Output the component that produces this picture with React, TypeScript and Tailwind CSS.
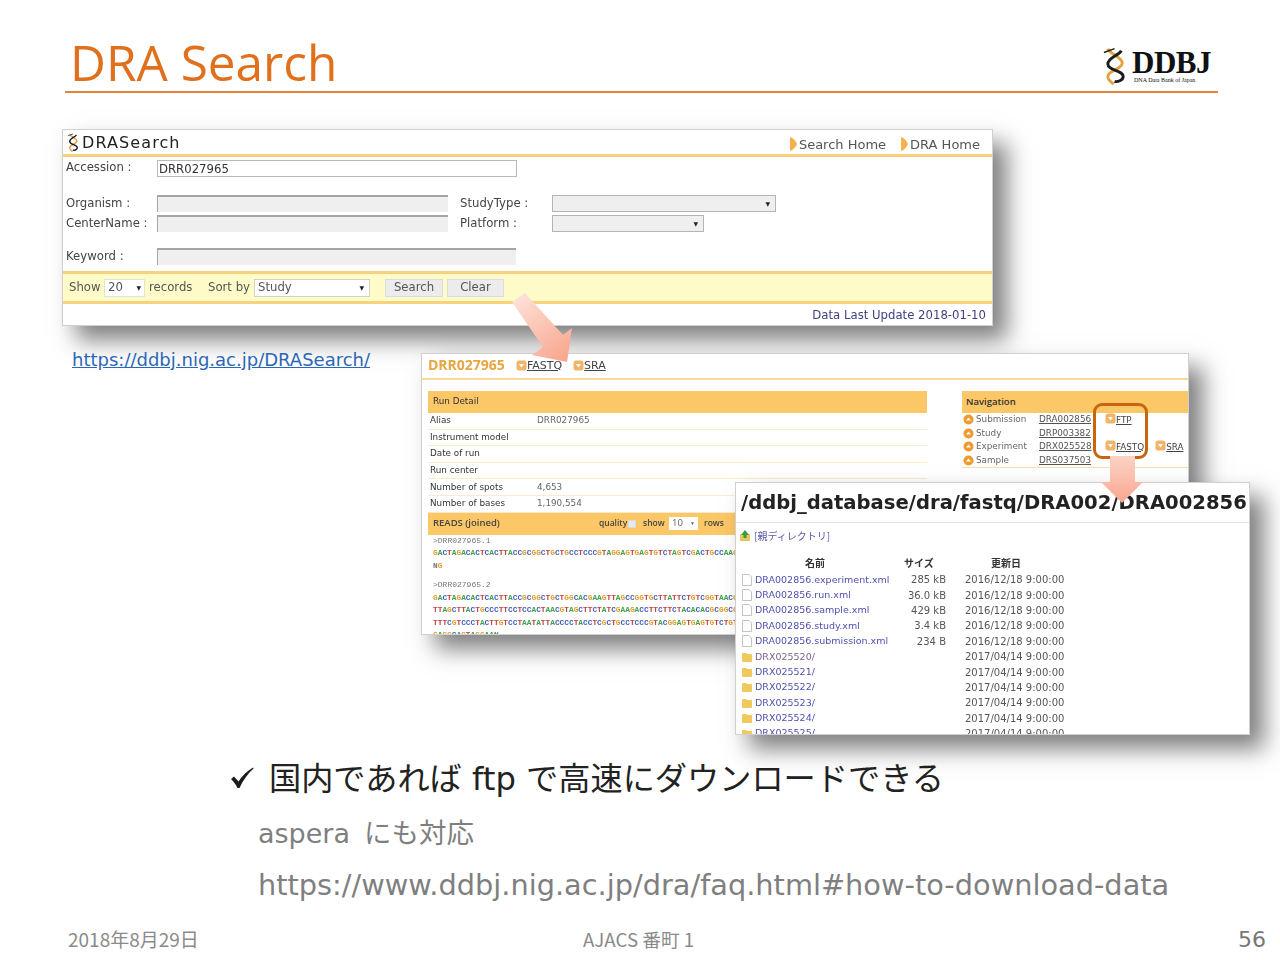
const sans = "font-['DejaVu_Sans',sans-serif]";
const strong = "font-['Open_Sans',sans-serif] font-semibold text-[9.5px]";

const seqColor: Record<string, string> = {
  A: "text-[#3fa34d]",
  C: "text-[#3f5fc0]",
  G: "text-[#e09a2b]",
  T: "text-[#c0453f]",
};

const Seq = ({ text }: { text: string }) => (
  <div className="h-[12.5px] whitespace-nowrap overflow-hidden font-['Liberation_Mono',monospace] text-[7.8px] leading-[12.5px] font-bold">
    {text.split("").map((c, i) => (
      <span key={i} className={seqColor[c]}>
        {c}
      </span>
    ))}
  </div>
);

const Helix = ({ className }: { className: string }) => (
  <svg viewBox="0 0 26 40" className={className} fill="none">
    <path d="M5 2 C8 9 20 10 20 17 C20 24 5 24 5 31 C5 35 9 37 11 39" stroke="#e3a23c" strokeWidth="3" />
    <path d="M19 4 C17 9 5 11 5 18 C5 25 21 24 21 31 C21 35 15 37 12 36" stroke="#1c1c1c" strokeWidth="3" />
    <path d="M1 6 L12 2" stroke="#1c1c1c" strokeWidth="1.5" />
  </svg>
);

const Bullet = () => (
  <svg viewBox="0 0 8 14" className="w-[8px] h-[14px] shrink-0 mb-[2px]">
    <path d="M1 0 C4 1 7 4 8 7 C7 10 4 13 1 14 Z" fill="#f3b04d" />
  </svg>
);

const Dl = () => (
  <svg viewBox="0 0 11 11" className="w-[11px] h-[11px] shrink-0 mb-[3px]">
    <rect x="0.5" y="0.5" width="10" height="10" rx="2.5" fill="#f0b565" />
    <path d="M3 4 H8 L5.5 7.5 Z" fill="#fff" />
  </svg>
);

const NavDot = () => (
  <svg viewBox="0 0 11 11" className="w-[11px] h-[11px] shrink-0">
    <circle cx="5.5" cy="5.5" r="5" fill="#ee9a2e" />
    <path d="M3 6.5 L5.5 3.5 L8 6.5 Z" fill="#fff" />
  </svg>
);

const FileIcon = () => (
  <svg viewBox="0 0 10 12" className="w-[10px] h-[12px] shrink-0">
    <path d="M0.5 0.5 H7 L9.5 3 V11.5 H0.5 Z" fill="#fff" stroke="#c4c4c4" />
  </svg>
);

const FolderIcon = () => (
  <svg viewBox="0 0 10 10" className="w-[10px] h-[10px] shrink-0">
    <path d="M0 2 Q0 1 1 1 H4 L5 2 H9 Q10 2 10 3 V9 Q10 10 9 10 H1 Q0 10 0 9 Z" fill="#f0c85c" />
  </svg>
);

const DisabledInput = ({ width }: { width: string }) => (
  <div className={`${width} h-[17px] bg-[#efefef] border-t-2 border-l border-[#a5a5a5]`} />
);

const DisabledSelect = ({ width }: { width: string }) => (
  <div className={`${width} h-[17px] bg-[#efefef] border border-[#b5b5b5] flex items-center justify-end pr-[5px] text-[6px] text-[#222]`}>
    ▼
  </div>
);

const SearchWindow = () => (
  <div className={`absolute left-[62px] top-[36px] w-[931px] h-[197px] bg-white border border-[#d0d0d0] shadow-[14px_14px_22px_rgba(0,0,0,0.5)] text-[#444] text-[11.7px] blur-[0.2px] ${sans}`}>
    <div className="h-[27px] border-b-[3px] border-[#f6d27e] flex items-center pl-[4px] pr-[12px]">
      <Helix className="w-[13px] h-[19px]" />
      <span className="ml-[2px] mt-[1px] text-[16px] tracking-[1.1px] text-[#222]">DRASearch</span>
      <div className="ml-auto mt-[5px] flex items-center gap-[14px] text-[13px] text-[#555]">
        <span className="flex items-center gap-[2px]"><Bullet />Search Home</span>
        <span className="flex items-center gap-[2px]"><Bullet />DRA Home</span>
      </div>
    </div>
    <div className="pl-[3px] h-[114px] flex flex-col">
      <div className="flex mt-[3px] h-[17px]">
        <span className="w-[91px] -mt-[1px]">Accession :</span>
        <div className="w-[360px] h-[17px] border border-[#b9b9b9] pl-[1px] leading-[16px] text-[#333]">DRR027965</div>
      </div>
      <div className="flex mt-[18px] h-[17px] items-center">
        <span className="w-[91px]">Organism :</span>
        <DisabledInput width="w-[291px]" />
        <span className="ml-[12px] w-[92px]">StudyType :</span>
        <DisabledSelect width="w-[224px]" />
      </div>
      <div className="flex mt-[3px] h-[17px] items-center">
        <span className="w-[91px]">CenterName :</span>
        <DisabledInput width="w-[291px]" />
        <span className="ml-[12px] w-[92px]">Platform :</span>
        <DisabledSelect width="w-[152px]" />
      </div>
      <div className="flex mt-[16px] h-[17px] items-center">
        <span className="w-[91px]">Keyword :</span>
        <DisabledInput width="w-[359px]" />
      </div>
    </div>
    <div className="h-[33px] bg-[#fffbc9] border-y-[3px] border-[#f6d27e] flex items-center pl-[6px] text-[#555]">
      <span className="w-[31px]">Show</span>
      <div className="ml-[4px] w-[41px] h-[18px] bg-white border border-[#e4e4d0] pl-[3px] flex items-center justify-between pr-[3px]">
        20<span className="text-[6px] text-[#222]">▼</span>
      </div>
      <span className="ml-[4px] w-[43px]">records</span>
      <span className="ml-[16px] w-[42px] whitespace-nowrap">Sort by</span>
      <div className="ml-[4px] w-[116px] h-[18px] bg-white border border-[#d4d4c0] pl-[3px] flex items-center justify-between pr-[5px]">
        Study<span className="text-[6px] text-[#222]">▼</span>
      </div>
      <div className="ml-[15px] w-[58px] h-[18px] bg-[#ececec] border border-[#dcdcdc] flex items-center justify-center">Search</div>
      <div className="ml-[4px] w-[57px] h-[18px] bg-[#ececec] border border-[#dcdcdc] flex items-center justify-center">Clear</div>
    </div>
    <div className="flex justify-end pr-[6px] pt-[3px] text-[#3f3f85]">Data Last Update 2018-01-10</div>
  </div>
);

const runRows = [
  ["Alias", "DRR027965"],
  ["Instrument model", ""],
  ["Date of run", ""],
  ["Run center", ""],
  ["Number of spots", "4,653"],
  ["Number of bases", "1,190,554"],
];

const navRows = [
  { k: "Submission", v: "DRA002856", extra: ["FTP"] },
  { k: "Study", v: "DRP003382", extra: [] },
  { k: "Experiment", v: "DRX025528", extra: ["FASTQ", "SRA"] },
  { k: "Sample", v: "DRS037503", extra: [] },
];

const DetailWindow = () => (
  <div className={`absolute left-[421px] top-[260px] w-[768px] h-[282px] bg-white border border-[#d0d0d0] shadow-[14px_14px_22px_rgba(0,0,0,0.5)] text-[#444] text-[8.8px] blur-[0.3px] ${sans}`}>
    <div className="h-[26px] border-b-2 border-[#fad995] flex items-center pl-[6px]">
      <span className="-mt-[3px] text-[14px] font-bold text-[#e8a540] font-['Open_Sans',sans-serif]">DRR027965</span>
      <span className="ml-[11px] flex items-end"><Dl /><span className="text-[11px] underline">FASTQ</span></span>
      <span className="ml-[11px] flex items-end"><Dl /><span className="text-[11px] underline">SRA</span></span>
    </div>
    <div className="flex mt-[11px] pl-[6px] h-[243px] overflow-hidden">
      <div className="w-[499px] shrink-0">
        <div className="h-[22px] bg-[#fcc766] flex items-center pl-[5px] text-[#333]">Run Detail</div>
        {runRows.map(([k, v]) => (
          <div key={k} className="h-[16.6px] flex items-center border-b border-[#f8eccb]">
            <span className="w-[109px] pl-[2px] text-[#333] whitespace-nowrap">{k}</span>
            <span className="text-[#666]">{v}</span>
          </div>
        ))}
        <div className={`h-[22px] bg-[#fcc766] flex items-center pl-[5px] text-[#444] ${strong}`}>
          <span className="w-[166px]">READS (joined)</span>
          <span className="w-[29px] text-[8.5px]">quality</span>
          <span className="w-[8px] h-[8px] bg-[#e8e8e8] border border-[#ddd]" />
          <span className="ml-[7px] w-[22px] text-[8.5px]">show</span>
          <span className="ml-[4px] w-[29px] h-[13px] bg-white flex items-center justify-between px-[3px] font-normal text-[#666]">
            10<span className="text-[5px]">▼</span>
          </span>
          <span className="ml-[6px] text-[8.5px]">rows</span>
        </div>
        <div className="pl-[5px] text-[#777]">
          <div className="h-[12.5px] font-['Liberation_Mono',monospace] text-[8px] leading-[12.5px]">&gt;DRR027965.1</div>
          <Seq text="GACTAGACACTCACTTACCGCGGCTGCTGCCTCCCGTAGGAGTGAGTGTCTAGTCGACTGCCAAGG" />
          <Seq text="NG" />
          <div className="mt-[7px] h-[12.5px] font-['Liberation_Mono',monospace] text-[8px] leading-[12.5px]">&gt;DRR027965.2</div>
          <Seq text="GACTAGACACTCACTTACCGCGGCTGCTGGCACGAAGTTAGCCGGTGCTTATTCTGTCGGTAACGT" />
          <Seq text="TTAGCTTACTGCCCTTCCTCCACTAACGTAGCTTCTATCGAAGACCTTCTTCTACACACGCGGCGA" />
          <Seq text="TTTCGTCCCTACTTGTCCTAATATTACCCCTACCTCGCTGCCTCCCGTACGGAGTGAGTGTCTGTC" />
          <Seq text="GAGGCAGTAGGAAN" />
        </div>
      </div>
      <div className="ml-[35px] w-[227px] shrink-0">
        <div className={`h-[22px] bg-[#fcc766] flex items-center pl-[4px] text-[#333] ${strong}`}>Navigation</div>
        <div className="border-b border-[#f8dfa8]">
          {navRows.map((r) => (
            <div key={r.k} className="h-[13.5px] flex items-center pl-[1px] whitespace-nowrap">
              <NavDot />
              <span className="ml-[2px] w-[63px] shrink-0 text-[#666]">{r.k}</span>
              <span className="w-[66px] shrink-0 underline text-[#555]">{r.v}</span>
              {r.extra.map((e) => (
                <span key={e} className="flex items-end mr-[11px] shrink-0">
                  <Dl />
                  <span className="underline text-[#444]">{e}</span>
                </span>
              ))}
            </div>
          ))}
        </div>
      </div>
    </div>
  </div>
);

const files = [
  ["DRA002856.experiment.xml", "285 kB", "2016/12/18 9:00:00"],
  ["DRA002856.run.xml", "36.0 kB", "2016/12/18 9:00:00"],
  ["DRA002856.sample.xml", "429 kB", "2016/12/18 9:00:00"],
  ["DRA002856.study.xml", "3.4 kB", "2016/12/18 9:00:00"],
  ["DRA002856.submission.xml", "234 B", "2016/12/18 9:00:00"],
  ["DRX025520/", "", "2017/04/14 9:00:00"],
  ["DRX025521/", "", "2017/04/14 9:00:00"],
  ["DRX025522/", "", "2017/04/14 9:00:00"],
  ["DRX025523/", "", "2017/04/14 9:00:00"],
  ["DRX025524/", "", "2017/04/14 9:00:00"],
  ["DRX025525/", "", "2017/04/14 9:00:00"],
];

const DirWindow = () => (
  <div className={`absolute left-[735px] top-[389px] w-[515px] h-[253px] bg-white border border-[#d0d0d0] shadow-[14px_14px_22px_rgba(0,0,0,0.5)] blur-[0.3px] overflow-hidden ${sans}`}>
    <div className="h-[40px] border-b border-[#e4e4e4] flex items-center pl-[5px] text-[19.6px] font-bold whitespace-nowrap text-[#222]">
      /ddbj_database/dra/fastq/DRA002/DRA002856
    </div>
    <div className="mt-[5px] h-[14px] flex items-center pl-[4px] text-[10px] text-[#5a5ab0]">
      <svg viewBox="0 0 10 11" className="w-[10px] h-[11px]">
        <path d="M0 4 H10 V11 H0 Z" fill="#e2c85e" />
        <path d="M5 0 L9 5 H6.5 V8 H3.5 V5 H1 Z" fill="#3d9a3d" />
      </svg>
      <span className="ml-[4px] font-['Noto_Sans_CJK_JP',sans-serif]">[親ディレクトリ]</span>
    </div>
    <div className="mt-[13px] h-[15px] flex items-center text-[10px] font-bold text-[#333] font-['Noto_Sans_CJK_JP',sans-serif]">
      <span className="w-[168px] pl-[69px]">名前</span>
      <span className="w-[87px]">サイズ</span>
      <span>更新日</span>
    </div>
    <div className="mt-[2px] text-[10px] text-[#555]">
      {files.map(([name, size, date], i) => (
        <div key={name} className="h-[15.4px] flex items-center pl-[6px]">
          <span className="w-[10px]">{i < 5 ? <FileIcon /> : <FolderIcon />}</span>
          <span className={`ml-[3px] w-[137px] text-[9.5px] whitespace-nowrap ${i === 5 ? "text-[#85608f]" : "text-[#4f4fb0]"}`}>{name}</span>
          <span className="w-[54px] text-right">{size}</span>
          <span className="ml-[19px] whitespace-nowrap">{date}</span>
        </div>
      ))}
    </div>
  </div>
);

const App = () => {
  return (
    <div className="w-[1280px] h-[960px] bg-white overflow-hidden flex flex-col font-['DejaVu_Sans',sans-serif]">
      <div className="ml-[65px] mr-[62px] h-[93px] border-b-2 border-[#e5833a] flex justify-between items-end">
        <h1 className="ml-[5px] mb-[-6px] text-[49.5px] leading-[70px] font-medium text-[#e0701c] font-['Open_Sans',sans-serif]">DRA Search</h1>
        <div className="flex items-center mr-[8px] mb-[5px]">
          <Helix className="w-[25px] h-[40px]" />
          <div className="ml-[4px] w-[78px] flex flex-col items-start font-['Liberation_Serif',serif] text-[#111]">
            <span className="text-[31px] leading-[28px] font-bold tracking-[-0.5px]">DDBJ</span>
            <span className="ml-[2px] text-[6px] leading-[7px] whitespace-nowrap">DNA Data Bank of Japan</span>
          </div>
        </div>
      </div>

      <div className="relative h-[660px] shrink-0">
        <SearchWindow />
        <a className="absolute left-[72px] top-[253px] text-[18px] text-[#2b66b8] underline whitespace-nowrap">https://ddbj.nig.ac.jp/DRASearch/</a>
        <DetailWindow />
        <DirWindow />
        {/* ftp box over the navigation table */}
        <div className="absolute left-[1093px] top-[310px] w-[55px] h-[56px] border-[3px] border-[#c9650f] rounded-[9px]" />
        {/* arrows */}
        <svg viewBox="0 0 80 80" className="absolute left-[505px] top-[197px] w-[80px] h-[80px]">
          <defs>
            <linearGradient id="arrowA" x1="0.1" y1="0" x2="0.8" y2="1">
              <stop offset="0" stopColor="#fde3da" />
              <stop offset="1" stopColor="#f9a78f" />
            </linearGradient>
          </defs>
          <path d="M7 12 L20 3 L58 45 L67 38 L62 72 L27 65 L38 57 Z" fill="url(#arrowA)" />
        </svg>
        <svg viewBox="0 0 44 50" className="absolute left-[1100px] top-[363px] w-[44px] h-[50px]">
          <defs>
            <linearGradient id="arrowB" x1="0" y1="0" x2="0" y2="1">
              <stop offset="0" stopColor="#fcd2c5" />
              <stop offset="1" stopColor="#f9a78f" />
            </linearGradient>
          </defs>
          <path d="M10 0 H35 V26 H43 L22 47 L1 26 H10 Z" fill="url(#arrowB)" />
        </svg>
      </div>

      <div className="ml-[230px] mt-[4px] flex items-center h-[44px] text-[#222]">
        <svg viewBox="0 0 24 22" className="w-[24px] h-[22px] mr-[15px] shrink-0 -mt-[3px]">
          <path d="M1 12 L4 9.5 L8.5 14.5 C12 9 17 4 23 0.5 L23.5 1.5 C18 6.5 13 13 9.5 21 L7.5 21 C6 17.5 3.5 14.5 1 12 Z" fill="#1c1c1c" />
        </svg>
        <span className="font-['DejaVu_Sans','Noto_Sans_CJK_JP',sans-serif] text-[32.2px] whitespace-nowrap">国内であれば ftp で高速にダウンロードできる</span>
      </div>
      <div className="ml-[258px] mt-[11px] h-[44px] flex items-center text-[27px] text-[#7f7f7f] font-['DejaVu_Sans','Noto_Sans_CJK_JP',sans-serif] whitespace-nowrap">
        aspera
        <span className="ml-[14px] text-[27.5px]">にも対応</span>
      </div>
      <div className="ml-[258px] mt-[8px] h-[44px] flex items-center text-[28.8px] text-[#7f7f7f] whitespace-nowrap">https://www.ddbj.nig.ac.jp/dra/faq.html#how-to-download-data</div>

      <div className="mt-[16px] flex items-center h-[30px] pl-[68px] pr-[14px] text-[#8a8a8a] font-['Noto_Sans_CJK_JP',sans-serif]">
        <span className="w-[515px] text-[19px]">2018年8月29日</span>
        <span className="text-[18.7px]">AJACS 番町 1</span>
        <span className="ml-auto text-[22px] text-[#777] font-['DejaVu_Sans',sans-serif]">56</span>
      </div>
    </div>
  );
};

export default App;
